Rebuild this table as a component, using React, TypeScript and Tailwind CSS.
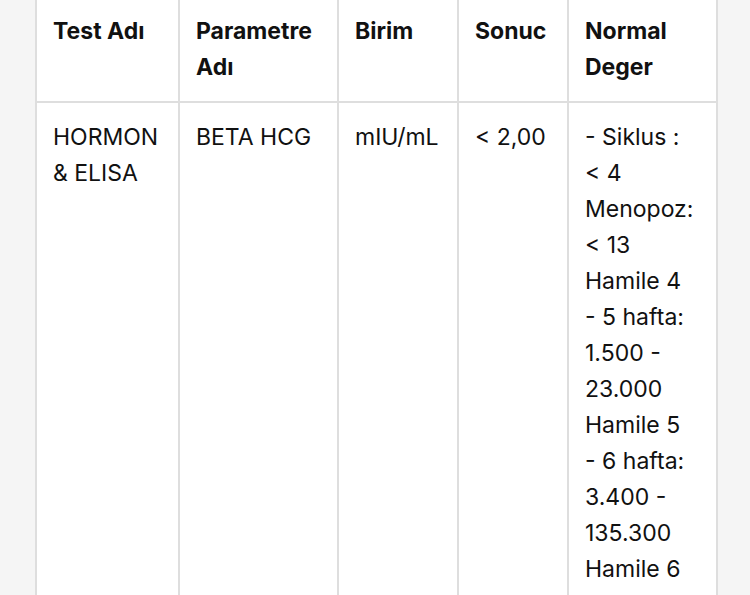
export default function App() {
  const normal = [
    '- Siklus :',
    '< 4',
    'Menopoz:',
    '< 13',
    'Hamile 4',
    '- 5 hafta:',
    '1.500 -',
    '23.000',
    'Hamile 5',
    '- 6 hafta:',
    '3.400 -',
    '135.300',
    'Hamile 6',
  ]

  const th = 'border-2 border-[#dedede] px-[16px] pt-[16px] pb-[16px] text-left align-top font-bold'
  const td = 'border-2 border-[#dedede] px-[16px] pt-[16px] pb-[16px] text-left align-top font-normal'

  return (
    <div className="h-[595px] overflow-hidden bg-[#f5f5f5] pl-[35px] text-[23px] leading-[36px] text-[#111] [font-family:Inter,'Noto_Sans',sans-serif]">
      <table className="-mt-[5px] table-fixed border-collapse bg-white">
        <colgroup>
          <col className="w-[143px]" />
          <col className="w-[159px]" />
          <col className="w-[120px]" />
          <col className="w-[110px]" />
          <col className="w-[149px]" />
        </colgroup>
        <thead>
          <tr>
            <th className={th}>Test Adı</th>
            <th className={th}>Parametre Adı</th>
            <th className={th}>Birim</th>
            <th className={th}>Sonuc</th>
            <th className={th}>Normal Deger</th>
          </tr>
        </thead>
        <tbody>
          <tr>
            <td className={td}>HORMON &amp; ELISA</td>
            <td className={td}>BETA HCG</td>
            <td className={td}>mIU/mL</td>
            <td className={td}>&lt; 2,00</td>
            <td className={td}>
              {normal.map((line, i) => (
                <div key={i} className="whitespace-nowrap">{line}</div>
              ))}
            </td>
          </tr>
        </tbody>
      </table>
    </div>
  )
}
